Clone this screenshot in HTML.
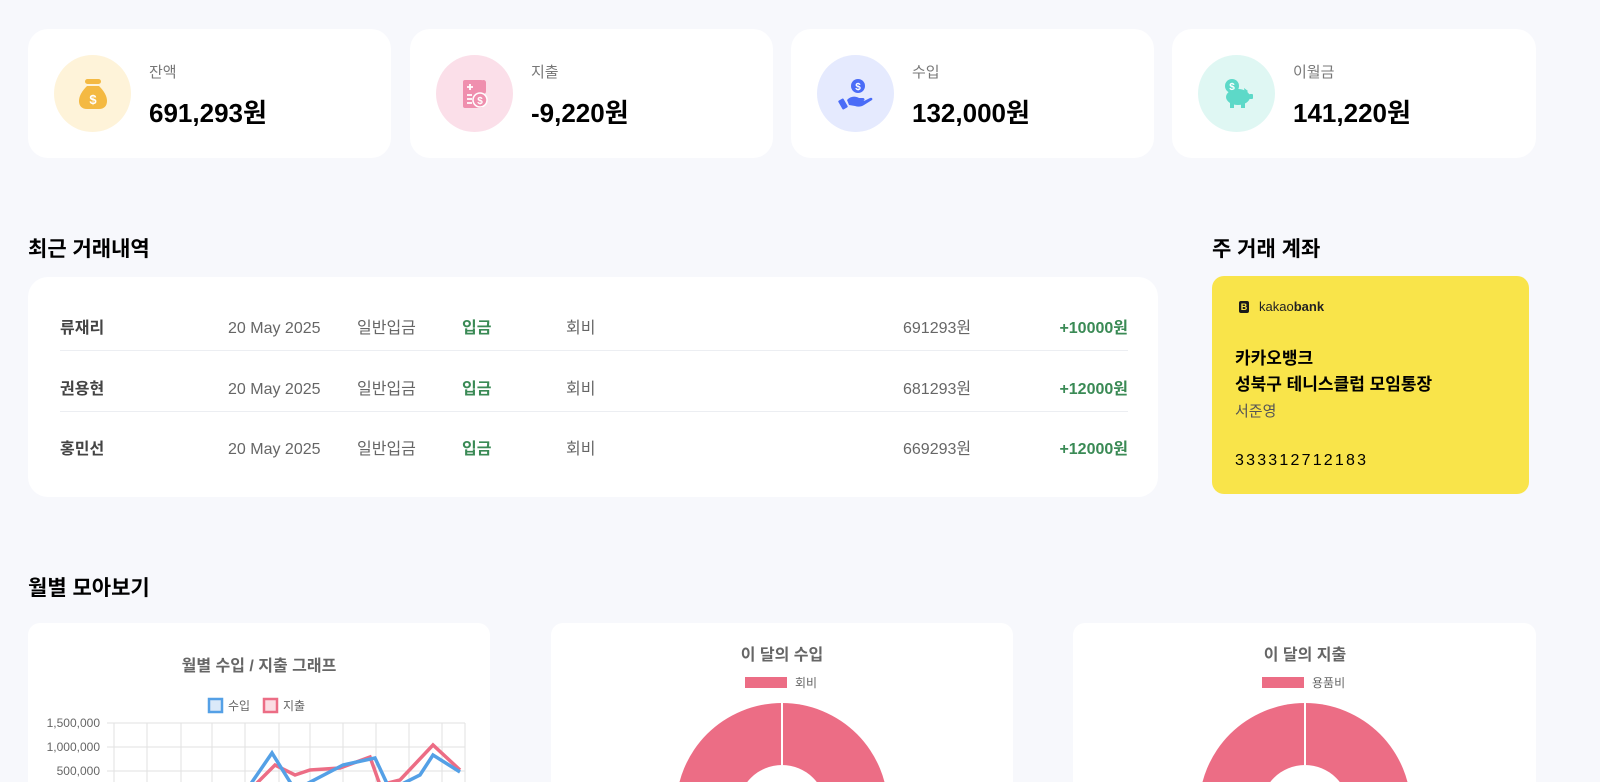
<!DOCTYPE html>
<html><head><meta charset="utf-8"><style>
*{margin:0;padding:0;box-sizing:border-box}
html,body{width:1600px;height:782px;overflow:hidden;background:#f7f8fc}
#w{position:relative;width:1600px;height:782px;overflow:hidden;font-family:"Liberation Sans","Noto Sans CJK KR",sans-serif;color:#000}
.card{position:absolute;background:#fff;border-radius:20px}
.ic{position:absolute;left:26px;top:26px;width:77px;height:77px;border-radius:50%;display:flex;align-items:center;justify-content:center}
.lbl{position:absolute;left:121px;top:32px;font-size:15px;color:#777}
.val{position:absolute;left:121px;top:64px;font-size:26px;font-weight:bold}
h2{position:absolute;font-size:21px;font-weight:bold}
.row{position:absolute;left:32px;width:1068px;height:61px;font-size:16px;color:#666}
.row span{position:absolute;top:8px;line-height:20px;height:20px}
.row .n{left:0;font-weight:bold;color:#444}
.row .g{color:#3a8a55;font-weight:bold}
.line{position:absolute;left:32px;width:1068px;height:1px;background:#eceef2}
</style></head><body><div id="w">

<div class="card" style="left:28px;top:29px;width:363px;height:129px">
<div class="ic" style="background:#fef3d9"><svg width="36" height="36" viewBox="0 0 36 36"><rect x="10" y="3" width="16" height="5" rx="2.5" fill="#f4b942"/><path d="M12 10h12c5 5 8 10 8 15 0 5-3 8-8 8H12c-5 0-8-3-8-8 0-5 3-10 8-15z" fill="#f4b942"/><text x="18" y="28" font-size="13" font-weight="bold" fill="#fff" text-anchor="middle" font-family="Liberation Sans">$</text></svg></div>
<div class="lbl">잔액</div><div class="val">691,293원</div></div>

<div class="card" style="left:410px;top:29px;width:363px;height:129px">
<div class="ic" style="background:#fbdfe9"><svg width="36" height="36" viewBox="0 0 36 36"><rect x="6" y="4" width="20" height="28" rx="2" fill="#ef8fae"/><rect x="24" y="4" width="5" height="14" rx="2.5" fill="#ef8fae"/><path d="M10 11h6M13 8v6M10 19h5M10 23h5M10 27h5" stroke="#fff" stroke-width="1.8"/><circle cx="23" cy="24" r="7" fill="#ef8fae" stroke="#fff" stroke-width="1.5"/><text x="23" y="28" font-size="10" font-weight="bold" fill="#fff" text-anchor="middle" font-family="Liberation Sans">$</text></svg></div>
<div class="lbl">지출</div><div class="val">-9,220원</div></div>

<div class="card" style="left:791px;top:29px;width:363px;height:129px">
<div class="ic" style="background:#e5eafe"><svg width="38" height="38" viewBox="0 0 38 38"><circle cx="21" cy="11" r="7" fill="#4a6cf7"/><text x="21" y="15" font-size="10" font-weight="bold" fill="#fff" text-anchor="middle" font-family="Liberation Sans">$</text><rect x="3" y="24" width="6" height="10" rx="1" transform="rotate(-30 6 29)" fill="#4a6cf7"/><path d="M10 25c4-4 8-4 12-2h4c2 0 2 3 0 3h-6 7l6-3c2-1 3 1 2 2l-8 5c-3 2-6 2-9 1l-6-1z" fill="#4a6cf7"/></svg></div>
<div class="lbl">수입</div><div class="val">132,000원</div></div>

<div class="card" style="left:1172px;top:29px;width:364px;height:129px">
<div class="ic" style="background:#dff7f3"><svg width="38" height="38" viewBox="0 0 38 38"><circle cx="14" cy="11" r="7" fill="#5dd9c8"/><text x="14" y="15" font-size="10" font-weight="bold" fill="#fff" text-anchor="middle" font-family="Liberation Sans">$</text><ellipse cx="20" cy="22" rx="12" ry="8" fill="#5dd9c8"/><path d="M26 13l4 3-3 3z" fill="#5dd9c8"/><rect x="31" y="19" width="4" height="5" rx="1" fill="#5dd9c8"/><rect x="12" y="27" width="4" height="6" fill="#5dd9c8"/><rect x="23" y="27" width="4" height="6" fill="#5dd9c8"/></svg></div>
<div class="lbl">이월금</div><div class="val">141,220원</div></div>

<h2 style="left:28px;top:233px">최근 거래내역</h2>
<div class="card" style="left:28px;top:277px;width:1130px;height:220px">
<div class="row" style="top:34px"><span class="n">류재리</span><span style="left:168px">20 May 2025</span><span style="left:297px">일반입금</span><span class="g" style="left:402px">입금</span><span style="left:506px">회비</span><span style="left:843px">691293원</span><span class="g" style="right:0">+10000원</span></div>
<div class="line" style="top:73px"></div>
<div class="row" style="top:95px"><span class="n">권용현</span><span style="left:168px">20 May 2025</span><span style="left:297px">일반입금</span><span class="g" style="left:402px">입금</span><span style="left:506px">회비</span><span style="left:843px">681293원</span><span class="g" style="right:0">+12000원</span></div>
<div class="line" style="top:134px"></div>
<div class="row" style="top:155px"><span class="n">홍민선</span><span style="left:168px">20 May 2025</span><span style="left:297px">일반입금</span><span class="g" style="left:402px">입금</span><span style="left:506px">회비</span><span style="left:843px">669293원</span><span class="g" style="right:0">+12000원</span></div>
</div>

<h2 style="left:1212px;top:233px">주 거래 계좌</h2>
<div style="position:absolute;left:1212px;top:276px;width:317px;height:218px;background:#f9e44a;border-radius:12px">
<div style="position:absolute;left:27px;top:25px;width:10px;height:12px;background:#1a1a1a;border-radius:2px;color:#f9e44a;font-size:9px;font-weight:bold;text-align:center;line-height:12px">B</div>
<div style="position:absolute;left:47px;top:23px;font-size:13px;color:#222">kakao<b>bank</b></div>
<div style="position:absolute;left:23px;top:70px;font-size:17px;font-weight:bold;line-height:26px">카카오뱅크<br>성북구 테니스클럽 모임통장</div>
<div style="position:absolute;left:23px;top:124px;font-size:15px;color:#555">서준영</div>
<div style="position:absolute;left:23px;top:176px;font-size:16px;letter-spacing:2.2px">333312712183</div>
</div>

<h2 style="left:28px;top:572px">월별 모아보기</h2>

<div class="card" style="left:28px;top:623px;width:462px;height:159px;border-radius:12px 12px 0 0"></div>
<div class="card" style="left:551px;top:623px;width:462px;height:159px;border-radius:12px 12px 0 0"></div>
<div class="card" style="left:1073px;top:623px;width:463px;height:159px;border-radius:12px 12px 0 0"></div>

<svg style="position:absolute;left:0;top:0;display:block" width="1600" height="782">
<text x="259" y="671" font-size="16" font-weight="bold" fill="#666" text-anchor="middle" font-family="Liberation Sans,Noto Sans CJK KR">월별 수입 / 지출 그래프</text>
<rect x="209" y="699" width="13" height="13" fill="#dbe9f9" stroke="#54a0e6" stroke-width="2.5"/>
<text x="228" y="710" font-size="12" fill="#666" font-family="Liberation Sans,Noto Sans CJK KR">수입</text>
<rect x="264" y="699" width="13" height="13" fill="#fbdde3" stroke="#ec6d85" stroke-width="2.5"/>
<text x="283" y="710" font-size="12" fill="#666" font-family="Liberation Sans,Noto Sans CJK KR">지출</text>
<g font-size="12" fill="#666" text-anchor="end" font-family="Liberation Sans"><text x="100" y="727">1,500,000</text><text x="100" y="751">1,000,000</text><text x="100" y="775">500,000</text></g>
<g stroke="#e2e2e2" stroke-width="1"><line x1="107" y1="723" x2="465" y2="723"/><line x1="107" y1="747" x2="465" y2="747"/><line x1="107" y1="771" x2="465" y2="771"/>
<line x1="114" y1="723" x2="114" y2="782"/><line x1="147" y1="723" x2="147" y2="782"/><line x1="181" y1="723" x2="181" y2="782"/><line x1="212" y1="723" x2="212" y2="782"/><line x1="245" y1="723" x2="245" y2="782"/><line x1="279" y1="723" x2="279" y2="782"/><line x1="310" y1="723" x2="310" y2="782"/><line x1="343" y1="723" x2="343" y2="782"/><line x1="376" y1="723" x2="376" y2="782"/><line x1="409" y1="723" x2="409" y2="782"/><line x1="442" y1="723" x2="442" y2="782"/><line x1="465" y1="723" x2="465" y2="782"/></g>
<polyline points="255,785 275,765 295,775 310,770 340,768 370,757 380,785 400,780 433,745 460,770" fill="none" stroke="#ec6d85" stroke-width="3.5"/>
<polyline points="250,785 272,753 295,790 343,765 375,758 390,790 420,775 433,755 460,772" fill="none" stroke="#54a0e6" stroke-width="3.5"/>
<text x="782" y="660" font-size="16" font-weight="bold" fill="#666" text-anchor="middle" font-family="Liberation Sans,Noto Sans CJK KR">이 달의 수입</text>
<rect x="745" y="677" width="42" height="11" fill="#ec6d85"/>
<text x="795" y="687" font-size="12" fill="#666" font-family="Liberation Sans,Noto Sans CJK KR">회비</text>
<circle cx="782" cy="809" r="106" fill="#ec6d85"/><circle cx="782" cy="809" r="44" fill="#fff"/><line x1="782" y1="700" x2="782" y2="765" stroke="#fff" stroke-width="2"/>
<text x="1305" y="660" font-size="16" font-weight="bold" fill="#666" text-anchor="middle" font-family="Liberation Sans,Noto Sans CJK KR">이 달의 지출</text>
<rect x="1262" y="677" width="42" height="11" fill="#ec6d85"/>
<text x="1312" y="687" font-size="12" fill="#666" font-family="Liberation Sans,Noto Sans CJK KR">용품비</text>
<circle cx="1305" cy="809" r="106" fill="#ec6d85"/><circle cx="1305" cy="809" r="44" fill="#fff"/><line x1="1305" y1="700" x2="1305" y2="765" stroke="#fff" stroke-width="2"/>
</svg>
</div></body></html>
